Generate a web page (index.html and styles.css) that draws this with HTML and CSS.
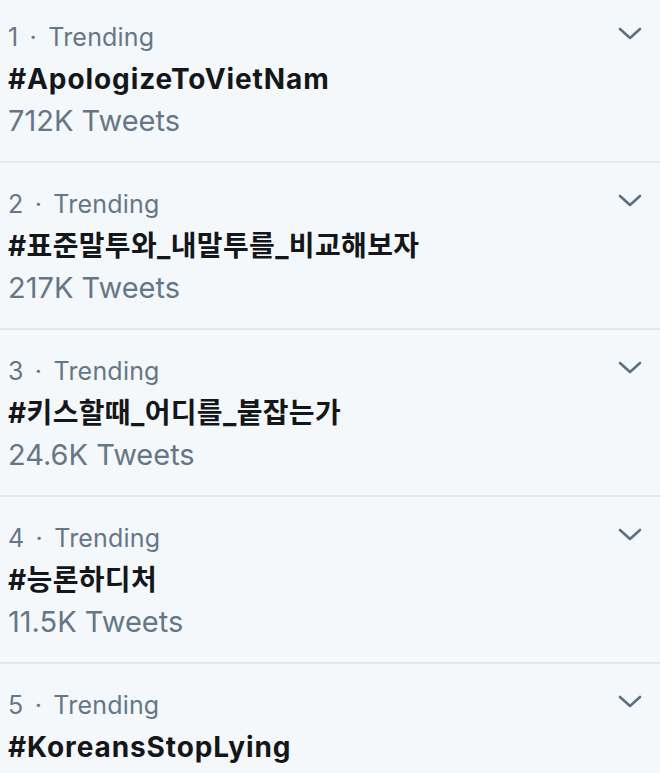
FILE: index.html
```html
<!DOCTYPE html>
<html lang="ko">
<head>
<meta charset="utf-8">
<link rel="stylesheet" href="styles.css">
</head>
<body>
<ul class="trends">
  <li class="trend first">
    <div class="info">
      <div class="meta">1 · Trending</div>
      <div class="tag">#ApologizeToVietNam</div>
      <div class="count">712K Tweets</div>
    </div>
    <svg class="chev" viewBox="0 0 24 14" aria-hidden="true"><path d="M2 2 L12 11 L22 2"/></svg>
  </li>
  <li class="trend">
    <div class="info">
      <div class="meta">2 · Trending</div>
      <div class="tag ko">#표준말투와_내말투를_비교해보자</div>
      <div class="count">217K Tweets</div>
    </div>
    <svg class="chev" viewBox="0 0 24 14" aria-hidden="true"><path d="M2 2 L12 11 L22 2"/></svg>
  </li>
  <li class="trend">
    <div class="info">
      <div class="meta">3 · Trending</div>
      <div class="tag ko">#키스할때_어디를_붙잡는가</div>
      <div class="count">24.6K Tweets</div>
    </div>
    <svg class="chev" viewBox="0 0 24 14" aria-hidden="true"><path d="M2 2 L12 11 L22 2"/></svg>
  </li>
  <li class="trend">
    <div class="info">
      <div class="meta">4 · Trending</div>
      <div class="tag ko">#능론하디처</div>
      <div class="count">11.5K Tweets</div>
    </div>
    <svg class="chev" viewBox="0 0 24 14" aria-hidden="true"><path d="M2 2 L12 11 L22 2"/></svg>
  </li>
  <li class="trend last">
    <div class="info">
      <div class="meta">5 · Trending</div>
      <div class="tag">#KoreansStopLying</div>
    </div>
    <svg class="chev" viewBox="0 0 24 14" aria-hidden="true"><path d="M2 2 L12 11 L22 2"/></svg>
  </li>
</ul>
</body>
</html>
```

FILE: styles.css
```css
html, body {
  margin: 0;
  padding: 0;
  background: #f5f8fa;
  height: 100%;
  overflow: hidden;
}
.trends {
  list-style: none;
  margin: 0;
  padding: 0;
  font-family: Inter, "Noto Sans CJK KR", sans-serif;
}
.trend {
  display: flex;
  justify-content: space-between;
  align-items: flex-start;
  height: 167px;
  box-sizing: border-box;
  padding: 20px 18px 19px 8px;
  border-bottom: 2px solid #e3e8ec;
}
.trend.first {
  height: 163px;
  padding-top: 16px;
}
.trend.last {
  border-bottom: none;
  height: auto;
}
.info {
  display: flex;
  flex-direction: column;
}
.meta {
  font-size: 25px;
  line-height: 42px;
  letter-spacing: 0.2px;
  word-spacing: 4px;
  color: #657786;
}
.count {
  font-size: 29px;
  line-height: 42px;
  color: #657786;
}
.tag {
  font-size: 28px;
  line-height: 42px;
  font-weight: 700;
  letter-spacing: 0.9px;
  color: #14171a;
}
.tag.ko {
  letter-spacing: 0.35px;
}
.chev {
  width: 24px;
  height: 14px;
  margin-top: 11px;
  fill: none;
  stroke: #5b7083;
  stroke-width: 2.6;
  stroke-linecap: round;
  stroke-linejoin: round;
}
```
